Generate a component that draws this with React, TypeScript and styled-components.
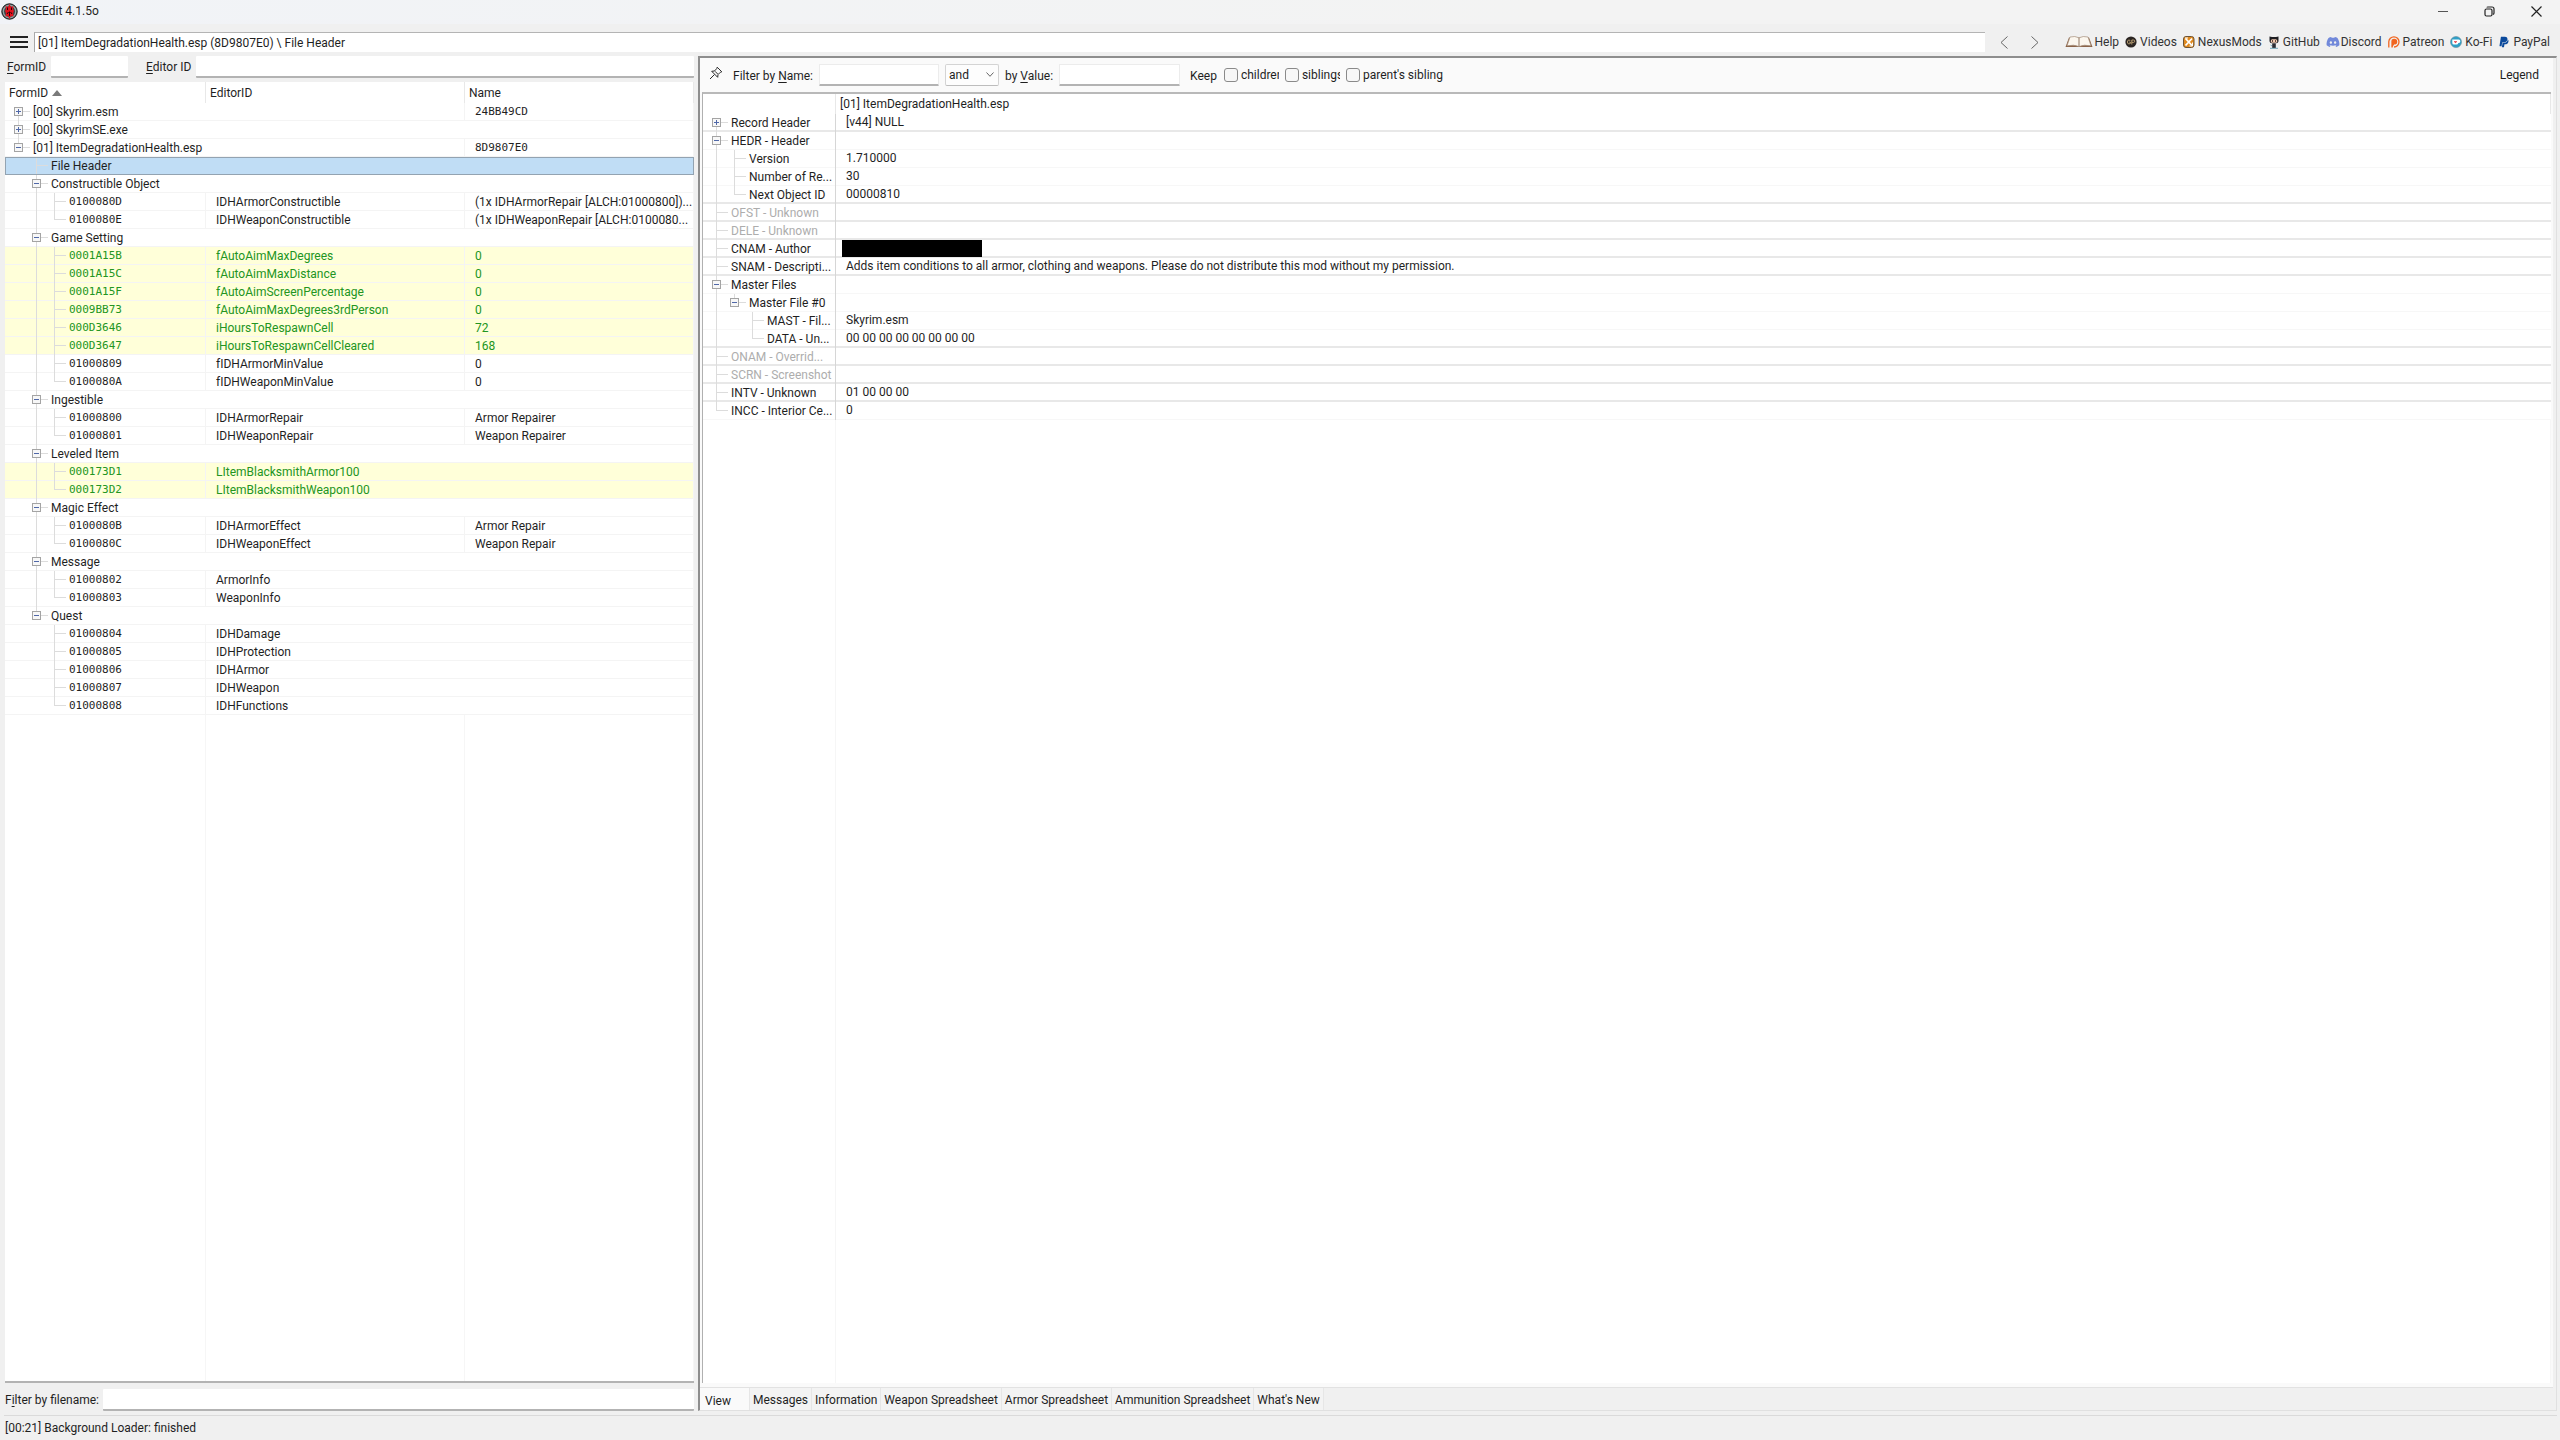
import React from 'react';
import styled, { createGlobalStyle, css } from 'styled-components';
import { FaDiscord, FaPaypal } from 'react-icons/fa';

const SANS = "Roboto, 'Open Sans', 'Liberation Sans', sans-serif";
const MONO = "'DejaVu Sans Mono', 'Liberation Mono', monospace";
const INK = '#1f1f1f';
const GREEN = '#229522';

const GlobalStyle = createGlobalStyle`
  * { box-sizing: border-box; }
  body { margin: 0; background: #f0f0f0; }
  body, button, input, select, table { font: 12px/16px ${SANS}; color: ${INK}; }
  u { text-underline-offset: 2px; }
`;

/* ---------- window frame ---------- */

const Window = styled.div`
  display: flex;
  flex-direction: column;
  height: 100vh;
  overflow: hidden;
`;

const TitleBar = styled.header`
  display: flex;
  align-items: center;
  height: 24px;
  padding: 0 0 2px 1px;
  background: linear-gradient(90deg, #f1f3f7, #f3f3f3 60%);
`;

const Title = styled.h1`
  flex: 1;
  margin: 0 0 0 3px;
  font: 12px/16px ${SANS};
`;

const CaptionButton = styled.button`
  display: grid;
  place-items: center;
  width: 47px;
  height: 22px;
  padding: 0;
  border: 0;
  background: none;
`;

const Toolbar = styled.nav`
  display: flex;
  align-items: center;
  height: 32px;
  padding: 4px 10px 0 8px;
`;

const IconButton = styled.button<{ $w: number }>`
  display: grid;
  place-items: center;
  width: ${(p) => p.$w}px;
  height: 20px;
  padding: 0;
  border: 0;
  background: none;
`;

const Address = styled.input`
  flex: 1;
  height: 20px;
  margin: 0 4px;
  padding: 0 3px;
  border: 0;
  border-top: 1px solid #b4b4b4;
  border-left: 1px solid #a8a8a8;
  background: #fff;
  outline: 0;
`;

const Links = styled.div`
  display: flex;
  gap: 5px;
  margin-left: 13px;
`;

const ExternalLink = styled.a`
  display: flex;
  align-items: center;
  color: #333;
  text-decoration: none;
  line-height: 20px;
`;

const LinkIcon = styled.span<{ $wide?: boolean }>`
  display: flex;
  width: ${(p) => (p.$wide ? 31 : 16)}px;
  padding-left: 1px;
`;

const Main = styled.main`
  display: flex;
  flex: 1;
  min-height: 0;
`;

const StatusBar = styled.footer`
  height: 25px;
  margin: 0 3px 0 4px;
  padding: 4px 1px;
  border-top: 1px solid #dadada;
`;

/* ---------- form fields ---------- */

const Field = styled.input<{ $w?: number; $framed?: boolean }>`
  ${(p) => (p.$w ? css`width: ${p.$w}px;` : css`flex: 1; min-width: 0;`)}
  height: 22px;
  padding: 0 4px;
  border: ${(p) => (p.$framed ? '1px solid #ececec' : '0')};
  border-bottom: 2px solid #b3b3b3;
  border-radius: 1px;
  background: #fff;
  outline: 0;
`;

/* ---------- navigation pane ---------- */

const NavPane = styled.section`
  display: flex;
  flex-direction: column;
  width: 698px;
  padding: 0 4px 4px 5px;
`;

const SearchRow = styled.div`
  display: flex;
  align-items: center;
  gap: 5px;
  padding: 0 0 4px 2px;
`;

const SearchLabel = styled.label<{ $gap?: boolean }>`
  margin-left: ${(p) => (p.$gap ? 13 : 0)}px;
`;

const FileFilterRow = styled.div`
  display: flex;
  align-items: center;
  gap: 4px;
  padding-top: 6px;
`;

const TreeBox = styled.div`
  display: flex;
  flex: 1;
  flex-direction: column;
  min-height: 0;
  border-bottom: 2px solid #b3b3b3;
  background: #fff;
`;

const Table = styled.table`
  width: 100%;
  border-spacing: 0;
  table-layout: fixed;
`;

const Col = styled.col<{ $w?: number }>`
  ${(p) => p.$w && css`width: ${p.$w}px;`}
`;

const HeadCell = styled.th<{ $h: number }>`
  height: ${(p) => p.$h}px;
  padding: 0 4px;
  border-right: 1px solid #e8e8e8;
  font-weight: 400;
  text-align: left;
`;

const SortMark = styled.svg`
  margin-left: 4px;
  vertical-align: 1px;
`;

type Tone = 'normal' | 'override' | 'selected';

const NavRow = styled.tr<{ $tone: Tone }>`
  color: ${(p) => (p.$tone === 'override' ? GREEN : INK)};
  background: ${(p) =>
    p.$tone === 'override' ? '#ffffd9' : p.$tone === 'selected' ? '#c0ddf5' : '#fff'};
  ${(p) => p.$tone === 'selected' && css`outline: 1px solid #93a3b1; outline-offset: -1px;`}
`;

const Cell = styled.td<{ $mono?: boolean }>`
  height: 18px;
  padding: 0 4px 0 10px;
  border-right: 1px solid #f4f4f4;
  box-shadow: inset 0 -1px #f4f4f4;
  overflow: hidden;
  white-space: nowrap;
  ${(p) => p.$mono && css`font: 11px/16px ${MONO};`}
`;

const TreeTd = styled(Cell)`
  padding: 0 0 0 4px;
`;

const TreeLine = styled.div<{ $mono?: boolean; $dim?: boolean }>`
  display: flex;
  align-items: center;
  height: 18px;
  color: ${(p) => (p.$dim ? '#adadad' : 'inherit')};
  ${(p) => p.$mono && css`font: 11px/16px ${MONO};`}
`;

/* Guide codes: "|" line, "+" branch, "L" last branch, "s" first root, " " blank */
const V_SIZE: Record<string, string> = { '|': '100%', '+': '100%', L: '9px', s: '9px', ' ': '0' };

const Guide = styled.span<{ $code: string; $leaf: boolean }>`
  display: grid;
  place-items: center start;
  flex: none;
  width: ${(p) => (p.$leaf ? 24 : 18)}px;
  height: 18px;
  padding: 0 0 1px 5px;
  background-image: linear-gradient(#dcdcdc, #dcdcdc), linear-gradient(#dcdcdc, #dcdcdc);
  background-repeat: no-repeat;
  background-size: 1px ${(p) => V_SIZE[p.$code]}, ${(p) => (p.$leaf ? 12 : 0)}px 1px;
  background-position: 9px ${(p) => (p.$code === 's' ? '9px' : '0')}, 9px 8px;
`;

const Tail = styled.div<{ $cols: string }>`
  display: grid;
  grid-template-columns: ${(p) => p.$cols};
  flex: 1;
`;

const TailColumn = styled.span`
  border-right: 1px solid #f6f6f6;
`;

/* ---------- record pane ---------- */

const RecordPane = styled.section`
  display: flex;
  flex: 1;
  flex-direction: column;
  min-width: 0;
  margin: 0 3px 4px 0;
  border-top: 2px solid #8e8e8e;
  border-left: 2px solid #8e8e8e;
  border-right: 1px solid #e0e0e0;
  border-bottom: 1px solid #e0e0e0;
`;

const Sheet = styled.div`
  display: flex;
  flex: 1;
  flex-direction: column;
  min-height: 0;
  margin-right: 3px;
  padding: 0 2px 4px;
  background: #fafafa;
  border-bottom: 1px solid #e2e2e2;
`;

const FilterBar = styled.form`
  display: flex;
  align-items: center;
  gap: 6px;
  height: 34px;
  padding: 0 12px 1px 7px;
`;

const FilterLabel = styled.label<{ $pad?: number }>`
  margin-left: ${(p) => p.$pad || 0}px;
  padding-top: 3px;
`;

const SelectWrap = styled.span`
  display: flex;
  align-items: center;
  height: 22px;
  border: 1px solid #d4d4d4;
  border-bottom-color: #bdbdbd;
  border-radius: 2px;
  background: #fdfdfd;
`;

const Select = styled.select`
  width: 40px;
  padding: 0 0 0 3px;
  border: 0;
  appearance: none;
  background: none;
  outline: 0;
`;

const Chevron = styled.svg`
  margin-right: 4px;
  pointer-events: none;
`;

const Keep = styled.fieldset`
  display: flex;
  align-items: center;
  gap: 6px;
  min-width: 0;
  margin: 0 auto 0 0;
  padding: 0;
  border: 0;
`;

const KeepTitle = styled.span`
  padding: 3px 1px 0 4px;
`;

const CheckLabel = styled.label<{ $w: number }>`
  display: flex;
  align-items: center;
  gap: 3px;
  width: ${(p) => p.$w}px;
  overflow: hidden;
  white-space: nowrap;
`;

const Check = styled.input`
  flex: none;
  width: 14px;
  height: 14px;
  margin: 0;
  border: 1px solid #8a8a8a;
  border-radius: 3px;
  appearance: none;
  background: #f7f7f7;
`;

const PlainButton = styled.button`
  padding: 0;
  border: 0;
  background: none;
`;

const Grid = styled.div`
  display: flex;
  flex: 1;
  flex-direction: column;
  border-top: 2px solid #b9b9b9;
  border-left: 1px solid #b0b0b0;
  background: #fff;
`;

const RecCell = styled(Cell)<{ $strong?: boolean }>`
  border-right: 0;
  box-shadow: inset 0 ${(p) => (p.$strong ? '-2px #e8e8e8' : '-1px #f7f7f7')};
  vertical-align: top;
  line-height: 17px;
`;

const RecTree = styled(RecCell)`
  padding: 0 0 0 4px;
  border-right: 1px solid #d6d6d6;
`;

const Redacted = styled.div`
  width: 140px;
  height: 17px;
  margin-left: -4px;
  background: #000;
`;

const TabStrip = styled.div`
  display: flex;
  height: 22px;
`;

const Tab = styled.button<{ $active?: boolean }>`
  padding: ${(p) => (p.$active ? '4px 18px 0 5px' : '2px 3px 0')};
  border: 0;
  border-right: 1px solid #e6e6e6;
  background: ${(p) => (p.$active ? '#fafafa' : '#f3f3f3')};
`;

/* ---------- drawings ---------- */

const Expander = ({ open }: { open: boolean }) => (
  <svg width="9" height="9" viewBox="0 0 9 9">
    <rect x="0.5" y="0.5" width="8" height="8" fill="#f7f7f7" stroke="#a4a4a4" />
    <path d={open ? 'M2 4.5H7' : 'M2 4.5H7M4.5 2V7'} stroke="#5068a8" />
  </svg>
);

const AppIcon = () => (
  <svg width="17" height="17" viewBox="0 0 17 17">
    <circle cx="8.5" cy="8.5" r="7.7" fill="#3c4446" stroke="#15191a" />
    <circle cx="8.5" cy="8.5" r="6.2" fill="none" stroke="#93a3a3" strokeWidth="1.4" />
    <path d="M8.5 1L10 4 12.5 3 12 6 13 8 12 10 12.500 13.500 10 13 8.500 16 7 13 4.500 13.500 5 10 4 8 5 6 4.500 3 7 4Z" fill="#e0101c" />
    <path d="M6.500 4.500V7M10.500 4.500V7M8.500 8.500V13M6 11L7.500 9M11 11L9.500 9" stroke="#2a0508" />
  </svg>
);

const BookIcon = () => (
  <svg width="28" height="12" viewBox="0 0 28 12">
    <path d="M4 1.500L0.500 11H27.500L24 1.500Z" fill="#8a6247" />
    <path d="M5 1Q10-.4 14 1.800Q18-.4 23 1L26 9.800Q19 8.300 14 10.500Q9 8.300 2 9.800Z" fill="#fbf6ee" stroke="#a58e7a" strokeWidth=".7" />
    <path d="M14 2V10.500" stroke="#8d7460" />
  </svg>
);

const VideosIcon = () => (
  <svg width="12" height="12" viewBox="0 0 12 12">
    <circle cx="6" cy="6" r="5.600" fill="#2b2522" />
    <path d="M5.300 4.500Q2.500 3.200 2.500 6T5.300 7.500V6H4.300M6.800 8.500V4H8.500Q9.700 4 9.700 5.200T8.500 6.400H7" fill="none" stroke="#b99e71" />
  </svg>
);

const NexusIcon = () => (
  <svg width="12" height="12" viewBox="0 0 12 12">
    <rect x=".5" y=".5" width="10.500" height="11" rx="2.500" fill="#e08a1e" stroke="#6f5434" />
    <path d="M2.500 2.500L9 9.500M9 2.500L2.500 9.500" stroke="#fff" strokeWidth="1.800" />
    <path d="M2 2H5M9.500 6.500V10H6.500" stroke="#fff" fill="none" />
  </svg>
);

const GitHubIcon = () => (
  <svg width="12" height="13" viewBox="0 0 12 13">
    <path d="M1.500.5L4 1H8L10.500.5V5Q10.500 7.500 6 7.500T1.500 5Z" fill="#1e1e22" />
    <rect x="2.800" y="3.300" width="6.400" height="3.400" rx="1.500" fill="#f0c8ae" />
    <path d="M4.500 4.200V5.800M7.500 4.200V5.800" stroke="#3d2a26" />
    <path d="M4.200 7.500H7.800V12H4.200Z" fill="#2c2c33" />
    <path d="M2 12.300H10M2.500 9L4 10" stroke="#6fa5b8" />
  </svg>
);

const PatreonIcon = () => (
  <svg width="12" height="12" viewBox="0 0 12 12">
    <path d="M.8 11.500V5.800A5.100 5.100 0 1 1 6 11" fill="none" stroke="#f1651f" strokeWidth="1.300" />
    <path d="M4 11.500V5.800A2.300 2.300 0 1 1 6.500 8" fill="#f1651f" stroke="#f1651f" strokeWidth="1.300" />
  </svg>
);

const KofiIcon = () => (
  <svg width="12" height="12" viewBox="0 0 12 12">
    <circle cx="6" cy="6" r="5.500" fill="#2fa0c8" stroke="#6b8b98" strokeWidth=".6" />
    <path d="M2.300 3.500H8.600Q10.600 3.700 10.300 5.400T8.400 7Q8 8.600 6.500 8.600H4Q2.300 8.600 2.300 7Z" fill="#fff" />
    <path d="M5.500 7.300L4 5.800Q4 4.600 5.500 5.200Q7 4.600 7 5.800Z" fill="#e9434a" />
  </svg>
);

const PinIcon = () => (
  <svg width="14" height="14" viewBox="0 0 14 14" fill="none" stroke="#2a2a2a">
    <path d="M8.200 1.200L12.800 5.800L11.300 6.300L9 8.600L8.700 11.300L2.700 5.300L5.400 5L7.700 2.700Z" strokeLinejoin="round" />
    <path d="M5.500 8.500L1 13M6 5.300L8.700 8" />
  </svg>
);

/* ---------- data ---------- */

interface NavItem {
  g: string;
  id: string;
  open?: boolean;
  ed?: string;
  name?: string;
  tone?: Tone;
}

const leaf = (g: string, id: string, ed: string, name?: string, tone?: Tone): NavItem => ({ g, id, ed, name, tone });
const group = (id: string, g = ' +'): NavItem => ({ g, id, open: true });

const NAV: NavItem[] = [
  { g: 's', id: '[00] Skyrim.esm', open: false, name: '24BB49CD' },
  { g: '+', id: '[00] SkyrimSE.exe', open: false },
  { g: 'L', id: '[01] ItemDegradationHealth.esp', open: true, name: '8D9807E0' },
  { g: ' +', id: 'File Header', tone: 'selected' },
  group('Constructible Object'),
  leaf(' |+', '0100080D', 'IDHArmorConstructible', '(1x IDHArmorRepair [ALCH:01000800])...'),
  leaf(' |L', '0100080E', 'IDHWeaponConstructible', '(1x IDHWeaponRepair [ALCH:0100080...'),
  group('Game Setting'),
  leaf(' |+', '0001A15B', 'fAutoAimMaxDegrees', '0', 'override'),
  leaf(' |+', '0001A15C', 'fAutoAimMaxDistance', '0', 'override'),
  leaf(' |+', '0001A15F', 'fAutoAimScreenPercentage', '0', 'override'),
  leaf(' |+', '0009BB73', 'fAutoAimMaxDegrees3rdPerson', '0', 'override'),
  leaf(' |+', '000D3646', 'iHoursToRespawnCell', '72', 'override'),
  leaf(' |+', '000D3647', 'iHoursToRespawnCellCleared', '168', 'override'),
  leaf(' |+', '01000809', 'fIDHArmorMinValue', '0'),
  leaf(' |L', '0100080A', 'fIDHWeaponMinValue', '0'),
  group('Ingestible'),
  leaf(' |+', '01000800', 'IDHArmorRepair', 'Armor Repairer'),
  leaf(' |L', '01000801', 'IDHWeaponRepair', 'Weapon Repairer'),
  group('Leveled Item'),
  leaf(' |+', '000173D1', 'LItemBlacksmithArmor100', undefined, 'override'),
  leaf(' |L', '000173D2', 'LItemBlacksmithWeapon100', undefined, 'override'),
  group('Magic Effect'),
  leaf(' |+', '0100080B', 'IDHArmorEffect', 'Armor Repair'),
  leaf(' |L', '0100080C', 'IDHWeaponEffect', 'Weapon Repair'),
  group('Message'),
  leaf(' |+', '01000802', 'ArmorInfo'),
  leaf(' |L', '01000803', 'WeaponInfo'),
  group('Quest', ' L'),
  leaf('  +', '01000804', 'IDHDamage'),
  leaf('  +', '01000805', 'IDHProtection'),
  leaf('  +', '01000806', 'IDHArmor'),
  leaf('  +', '01000807', 'IDHWeapon'),
  leaf('  L', '01000808', 'IDHFunctions'),
];

interface RecItem {
  g: string;
  label: string;
  value?: string;
  open?: boolean;
  dim?: boolean;
  redacted?: boolean;
}

const RECORD: RecItem[] = [
  { g: 's', label: 'Record Header', value: '[v44] NULL', open: false },
  { g: '+', label: 'HEDR - Header', open: true },
  { g: '|+', label: 'Version', value: '1.710000' },
  { g: '|+', label: 'Number of Re...', value: '30' },
  { g: '|L', label: 'Next Object ID', value: '00000810' },
  { g: '+', label: 'OFST - Unknown', dim: true },
  { g: '+', label: 'DELE - Unknown', dim: true },
  { g: '+', label: 'CNAM - Author', redacted: true },
  {
    g: '+',
    label: 'SNAM - Descripti...',
    value:
      'Adds item conditions to all armor, clothing and weapons. Please do not distribute this mod without my permission.',
  },
  { g: '+', label: 'Master Files', open: true },
  { g: '|L', label: 'Master File #0', open: true },
  { g: '| +', label: 'MAST - Fil...', value: 'Skyrim.esm' },
  { g: '| L', label: 'DATA - Un...', value: '00 00 00 00 00 00 00 00' },
  { g: '+', label: 'ONAM - Overrid...', dim: true },
  { g: '+', label: 'SCRN - Screenshot', dim: true },
  { g: '+', label: 'INTV - Unknown', value: '01 00 00 00' },
  { g: 'L', label: 'INCC - Interior Ce...', value: '0' },
];

const LINKS = [
  { text: 'Help', icon: <BookIcon />, wide: true },
  { text: 'Videos', icon: <VideosIcon /> },
  { text: 'NexusMods', icon: <NexusIcon /> },
  { text: 'GitHub', icon: <GitHubIcon /> },
  { text: 'Discord', icon: <FaDiscord size={14} color="#7289da" /> },
  { text: 'Patreon', icon: <PatreonIcon /> },
  { text: 'Ko-Fi', icon: <KofiIcon /> },
  { text: 'PayPal', icon: <FaPaypal size={12} color="#0b4a9c" /> },
];

const TABS = [
  'View',
  'Messages',
  'Information',
  'Weapon Spreadsheet',
  'Armor Spreadsheet',
  'Ammunition Spreadsheet',
  "What's New",
];

/* ---------- parts ---------- */

const Tree = ({ g, text, open, mono, dim }: { g: string; text: string; open?: boolean; mono?: boolean; dim?: boolean }) => (
  <TreeLine $mono={mono} $dim={dim}>
    {g.split('').map((code, i) => {
      const last = i === g.length - 1;
      return (
        <Guide key={i} $code={code} $leaf={last}>
          {last && open !== undefined && <Expander open={open} />}
        </Guide>
      );
    })}
    {text}
  </TreeLine>
);

function NavTree() {
  return (
    <TreeBox>
      <Table>
        <colgroup>
          <Col $w={201} />
          <Col $w={259} />
          <Col />
        </colgroup>
        <thead>
          <tr>
            <HeadCell $h={21}>
              FormID
              <SortMark width="10" height="6" viewBox="0 0 10 6">
                <path d="M5 0L10 6H0Z" fill="#7a7a7a" />
              </SortMark>
            </HeadCell>
            <HeadCell $h={21}>EditorID</HeadCell>
            <HeadCell $h={21}>Name</HeadCell>
          </tr>
        </thead>
        <tbody>
          {NAV.map((n) => {
            const file = n.g.length === 1;
            const span = n.ed ? 1 : n.name ? 2 : 3;
            return (
              <NavRow key={n.id} $tone={n.tone || 'normal'}>
                <TreeTd colSpan={span}>
                  <Tree g={n.g} text={n.id} open={n.open} mono={!!n.ed} />
                </TreeTd>
                {n.ed && <Cell colSpan={n.name ? 1 : 2}>{n.ed}</Cell>}
                {n.name && <Cell $mono={file}>{n.name}</Cell>}
              </NavRow>
            );
          })}
        </tbody>
      </Table>
      <Tail $cols="201px 259px 1fr">
        <TailColumn />
        <TailColumn />
        <TailColumn />
      </Tail>
    </TreeBox>
  );
}

function RecordGrid() {
  return (
    <Grid>
      <Table>
        <colgroup>
          <Col $w={133} />
          <Col />
        </colgroup>
        <thead>
          <tr>
            <HeadCell $h={20} aria-label="Element" />
            <HeadCell $h={20}>[01] ItemDegradationHealth.esp</HeadCell>
          </tr>
        </thead>
        <tbody>
          {RECORD.map((r, i) => {
            const next = RECORD[i + 1];
            const strong = !!next && next.g.length === 1;
            return (
              <tr key={r.label}>
                <RecTree $strong={strong}>
                  <Tree g={r.g} text={r.label} open={r.open} dim={r.dim} />
                </RecTree>
                <RecCell $strong={strong}>{r.redacted ? <Redacted /> : r.value}</RecCell>
              </tr>
            );
          })}
        </tbody>
      </Table>
      <Tail $cols="133px 1fr">
        <TailColumn />
        <TailColumn />
      </Tail>
    </Grid>
  );
}

export default function App() {
  return (
    <Window>
      <GlobalStyle />
      <TitleBar>
        <AppIcon />
        <Title>SSEEdit 4.1.5o</Title>
        <CaptionButton aria-label="Minimize">
          <svg width="10" height="10"><path d="M0 5.500H10" stroke="#555" /></svg>
        </CaptionButton>
        <CaptionButton aria-label="Restore">
          <svg width="11" height="11" fill="none" stroke="#222" strokeWidth="1.200">
            <rect x="1" y="3" width="7" height="7" rx="1.500" />
            <path d="M3 1.500Q3 1 4 1H8Q10 1 10 3V7Q10 8 9 8.500" />
          </svg>
        </CaptionButton>
        <CaptionButton aria-label="Close">
          <svg width="11" height="11"><path d="M.5.500L10.500 10.500M10.500.500L.5 10.500" stroke="#222" strokeWidth="1.200" /></svg>
        </CaptionButton>
      </TitleBar>

      <Toolbar>
        <IconButton $w={22} aria-label="Menu">
          <svg width="18" height="12"><path d="M0 1H18M0 6H18M0 11H18" stroke="#222" strokeWidth="2" /></svg>
        </IconButton>
        <Address aria-label="Path" readOnly value="[01] ItemDegradationHealth.esp (8D9807E0) \ File Header" />
        <IconButton $w={31} aria-label="Back">
          <svg width="8" height="13" fill="none" stroke="#666"><path d="M7.500.5L1 6.500L7.500 12.500" /></svg>
        </IconButton>
        <IconButton $w={31} aria-label="Forward">
          <svg width="8" height="13" fill="none" stroke="#666"><path d="M.5.5L7 6.500L.5 12.500" /></svg>
        </IconButton>
        <Links>
          {LINKS.map((l) => (
            <ExternalLink key={l.text} href="#">
              <LinkIcon $wide={l.wide}>{l.icon}</LinkIcon>
              {l.text}
            </ExternalLink>
          ))}
        </Links>
      </Toolbar>

      <Main>
        <NavPane>
          <SearchRow>
            <SearchLabel htmlFor="form-id"><u>F</u>ormID</SearchLabel>
            <Field id="form-id" $w={77} />
            <SearchLabel htmlFor="editor-id" $gap><u>E</u>ditor ID</SearchLabel>
            <Field id="editor-id" />
          </SearchRow>
          <NavTree />
          <FileFilterRow>
            <label htmlFor="file-filter">F<u>i</u>lter by filename:</label>
            <Field id="file-filter" />
          </FileFilterRow>
        </NavPane>

        <RecordPane>
          <Sheet>
            <FilterBar onSubmit={(e) => e.preventDefault()}>
              <PlainButton type="button" aria-label="Pin"><PinIcon /></PlainButton>
              <FilterLabel htmlFor="by-name" $pad={4}>Filter by <u>N</u>ame:</FilterLabel>
              <Field id="by-name" $w={120} $framed />
              <SelectWrap>
                <Select aria-label="Operator" defaultValue="and">
                  <option>and</option>
                  <option>or</option>
                </Select>
                <Chevron width="8" height="5" fill="none" stroke="#666"><path d="M.5.500L4 4.300L7.500.500" /></Chevron>
              </SelectWrap>
              <FilterLabel htmlFor="by-value">by <u>V</u>alue:</FilterLabel>
              <Field id="by-value" $w={121} $framed />
              <Keep>
                <KeepTitle>Keep</KeepTitle>
                <CheckLabel $w={55}><Check type="checkbox" />children</CheckLabel>
                <CheckLabel $w={55}><Check type="checkbox" />siblings</CheckLabel>
                <CheckLabel $w={98}><Check type="checkbox" />parent's sibling</CheckLabel>
              </Keep>
              <PlainButton type="button">Legend</PlainButton>
            </FilterBar>
            <RecordGrid />
          </Sheet>
          <TabStrip role="tablist">
            {TABS.map((t, i) => (
              <Tab key={t} role="tab" aria-selected={i === 0} $active={i === 0}>{t}</Tab>
            ))}
          </TabStrip>
        </RecordPane>
      </Main>

      <StatusBar>[00:21] Background Loader: finished</StatusBar>
    </Window>
  );
}
